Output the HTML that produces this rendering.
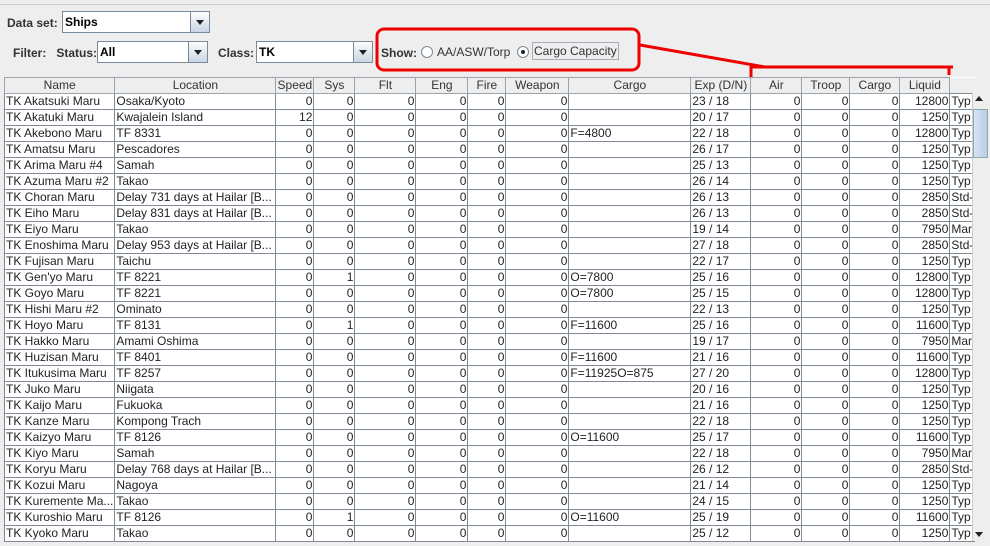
<!DOCTYPE html><html><head><style>
body{margin:0;width:990px;height:546px;background:#eeeeee;font-family:"Liberation Sans",sans-serif;position:relative;overflow:hidden}
.lbl{position:absolute;font-size:12px;font-weight:bold;color:#333}
.combo{position:absolute;height:22px;border:1px solid #7a8a99;background:#fff;box-sizing:border-box;font-size:12px;font-weight:bold;padding:3px 2px}
.combo .btn{position:absolute;right:0;top:0;width:18px;height:20px;border-left:1px solid #7a8a99;background:linear-gradient(#fdfdfd,#c8d6e4)}
.combo .btn:after{content:"";position:absolute;left:5px;top:8px;border-left:4px solid transparent;border-right:4px solid transparent;border-top:5px solid #222}
table{position:absolute;left:4px;top:77px;border-collapse:collapse;table-layout:fixed;font-size:12px;background:#fff}
td,th{border:1px solid #7f8a96;height:15px;padding:0 1px;white-space:nowrap;overflow:hidden;line-height:15px;color:#222}
th{font-weight:normal;background:#eee;border-color:#9aa4ae;color:#333}
td.r{text-align:right}
</style></head><body>
<div style="position:absolute;left:0;top:4px;width:990px;height:1px;background:#ccc"></div>
<div class="lbl" style="left:7px;top:16px">Data set:</div>
<div class="combo" style="left:62px;top:11px;width:148px">Ships<div class="btn"></div></div>
<div class="lbl" style="left:13px;top:46px">Filter:&nbsp;&nbsp; Status:</div>
<div class="combo" style="left:97px;top:41px;width:111px">All<div class="btn"></div></div>
<div class="lbl" style="left:218px;top:46px">Class:</div>
<div class="combo" style="left:256px;top:41px;width:117px">TK<div class="btn"></div></div>
<div class="lbl" style="left:381px;top:46px">Show:</div>
<div style="position:absolute;left:421px;top:46px;width:10px;height:10px;border:1px solid #7a8a99;border-radius:50%;background:#fff"></div>
<div style="position:absolute;left:437px;top:45px;font-size:12px;color:#333">AA/ASW/Torp</div>
<div style="position:absolute;left:517px;top:46px;width:10px;height:10px;border:1px solid #7a8a99;border-radius:50%;background:#fff"><div style="position:absolute;left:3px;top:3px;width:4px;height:4px;border-radius:50%;background:#222"></div></div>
<div style="position:absolute;left:532px;top:42px;font-size:12px;color:#333;border:1px solid #aab;padding:1px 1px">Cargo Capacity</div>
<svg style="position:absolute;left:0;top:0" width="990" height="546"><g fill="none" stroke="#e00" stroke-width="3"><rect x="377" y="29" width="262" height="41" rx="7"/><path d="M640 45 L765 67 M751 77 V67 H953 M949 67 V75"/></g></svg>
<table>
<colgroup><col style="width:110px"><col style="width:161px"><col style="width:38px"><col style="width:41px"><col style="width:61px"><col style="width:52px"><col style="width:38px"><col style="width:63px"><col style="width:122px"><col style="width:60px"><col style="width:51px"><col style="width:48px"><col style="width:50px"><col style="width:50px"><col style="width:23px"></colgroup>
<tr><th>Name</th><th>Location</th><th>Speed</th><th>Sys</th><th>Flt</th><th>Eng</th><th>Fire</th><th>Weapon</th><th>Cargo</th><th>Exp (D/N)</th><th>Air</th><th>Troop</th><th>Cargo</th><th>Liquid</th><th style="border:none;background:#eee"></th></tr>
<tbody id="b"></tbody></table>
<div style="position:absolute;left:972px;top:93px;width:15px;height:448px;background:#eee;border-left:1px solid #ccc"></div>
<div style="position:absolute;left:973px;top:109px;width:13px;height:47px;background:linear-gradient(90deg,#d8e4f2,#b8cce4);border:1px solid #8aa"></div>
<div style="position:absolute;left:975px;top:96px;border-left:4px solid transparent;border-right:4px solid transparent;border-bottom:5px solid #222"></div>
<div style="position:absolute;left:975px;top:532px;border-left:4px solid transparent;border-right:4px solid transparent;border-top:5px solid #222"></div>
<script>
var d=[["TK Akatsuki Maru","Osaka/Kyoto",0,0,"","23 / 18",12800,"Typ"],["TK Akatuki Maru","Kwajalein Island",12,0,"","20 / 17",1250,"Typ"],["TK Akebono Maru","TF 8331",0,0,"F=4800","22 / 18",12800,"Typ"],["TK Amatsu Maru","Pescadores",0,0,"","26 / 17",1250,"Typ"],["TK Arima Maru #4","Samah",0,0,"","25 / 13",1250,"Typ"],["TK Azuma Maru #2","Takao",0,0,"","26 / 14",1250,"Typ"],["TK Choran Maru","Delay 731 days at Hailar [B...",0,0,"","26 / 13",2850,"Std-"],["TK Eiho Maru","Delay 831 days at Hailar [B...",0,0,"","26 / 13",2850,"Std-"],["TK Eiyo Maru","Takao",0,0,"","19 / 14",7950,"Mar"],["TK Enoshima Maru","Delay 953 days at Hailar [B...",0,0,"","27 / 18",2850,"Std-"],["TK Fujisan Maru","Taichu",0,0,"","22 / 17",1250,"Typ"],["TK Gen'yo Maru","TF 8221",0,1,"O=7800","25 / 16",12800,"Typ"],["TK Goyo Maru","TF 8221",0,0,"O=7800","25 / 15",12800,"Typ"],["TK Hishi Maru #2","Ominato",0,0,"","22 / 13",1250,"Typ"],["TK Hoyo Maru","TF 8131",0,1,"F=11600","25 / 16",11600,"Typ"],["TK Hakko Maru","Amami Oshima",0,0,"","19 / 17",7950,"Mar"],["TK Huzisan Maru","TF 8401",0,0,"F=11600","21 / 16",11600,"Typ"],["TK Itukusima Maru","TF 8257",0,0,"F=11925O=875","27 / 20",12800,"Typ"],["TK Juko Maru","Niigata",0,0,"","20 / 16",1250,"Typ"],["TK Kaijo Maru","Fukuoka",0,0,"","21 / 16",1250,"Typ"],["TK Kanze Maru","Kompong Trach",0,0,"","22 / 18",1250,"Typ"],["TK Kaizyo Maru","TF 8126",0,0,"O=11600","25 / 17",11600,"Typ"],["TK Kiyo Maru","Samah",0,0,"","22 / 18",7950,"Mar"],["TK Koryu Maru","Delay 768 days at Hailar [B...",0,0,"","26 / 12",2850,"Std-"],["TK Kozui Maru","Nagoya",0,0,"","21 / 14",1250,"Typ"],["TK Kuremente Ma...","Takao",0,0,"","24 / 15",1250,"Typ"],["TK Kuroshio Maru","TF 8126",0,1,"O=11600","25 / 19",11600,"Typ"],["TK Kyoko Maru","Takao",0,0,"","25 / 12",1250,"Typ"]];
var h="";d.forEach(function(r){var w=r[4]?0:"0";h+="<tr><td>"+r[0]+"</td><td>"+r[1]+"</td><td class=r>"+r[2]+"</td><td class=r>"+r[3]+"</td><td class=r>0</td><td class=r>0</td><td class=r>0</td><td class=r>0</td><td>"+r[4]+"</td><td>"+r[5]+"</td><td class=r>0</td><td class=r>0</td><td class=r>0</td><td class=r>"+r[6]+"</td><td>"+r[7]+"</td></tr>"});document.getElementById("b").innerHTML=h;
</script>
</body></html>
